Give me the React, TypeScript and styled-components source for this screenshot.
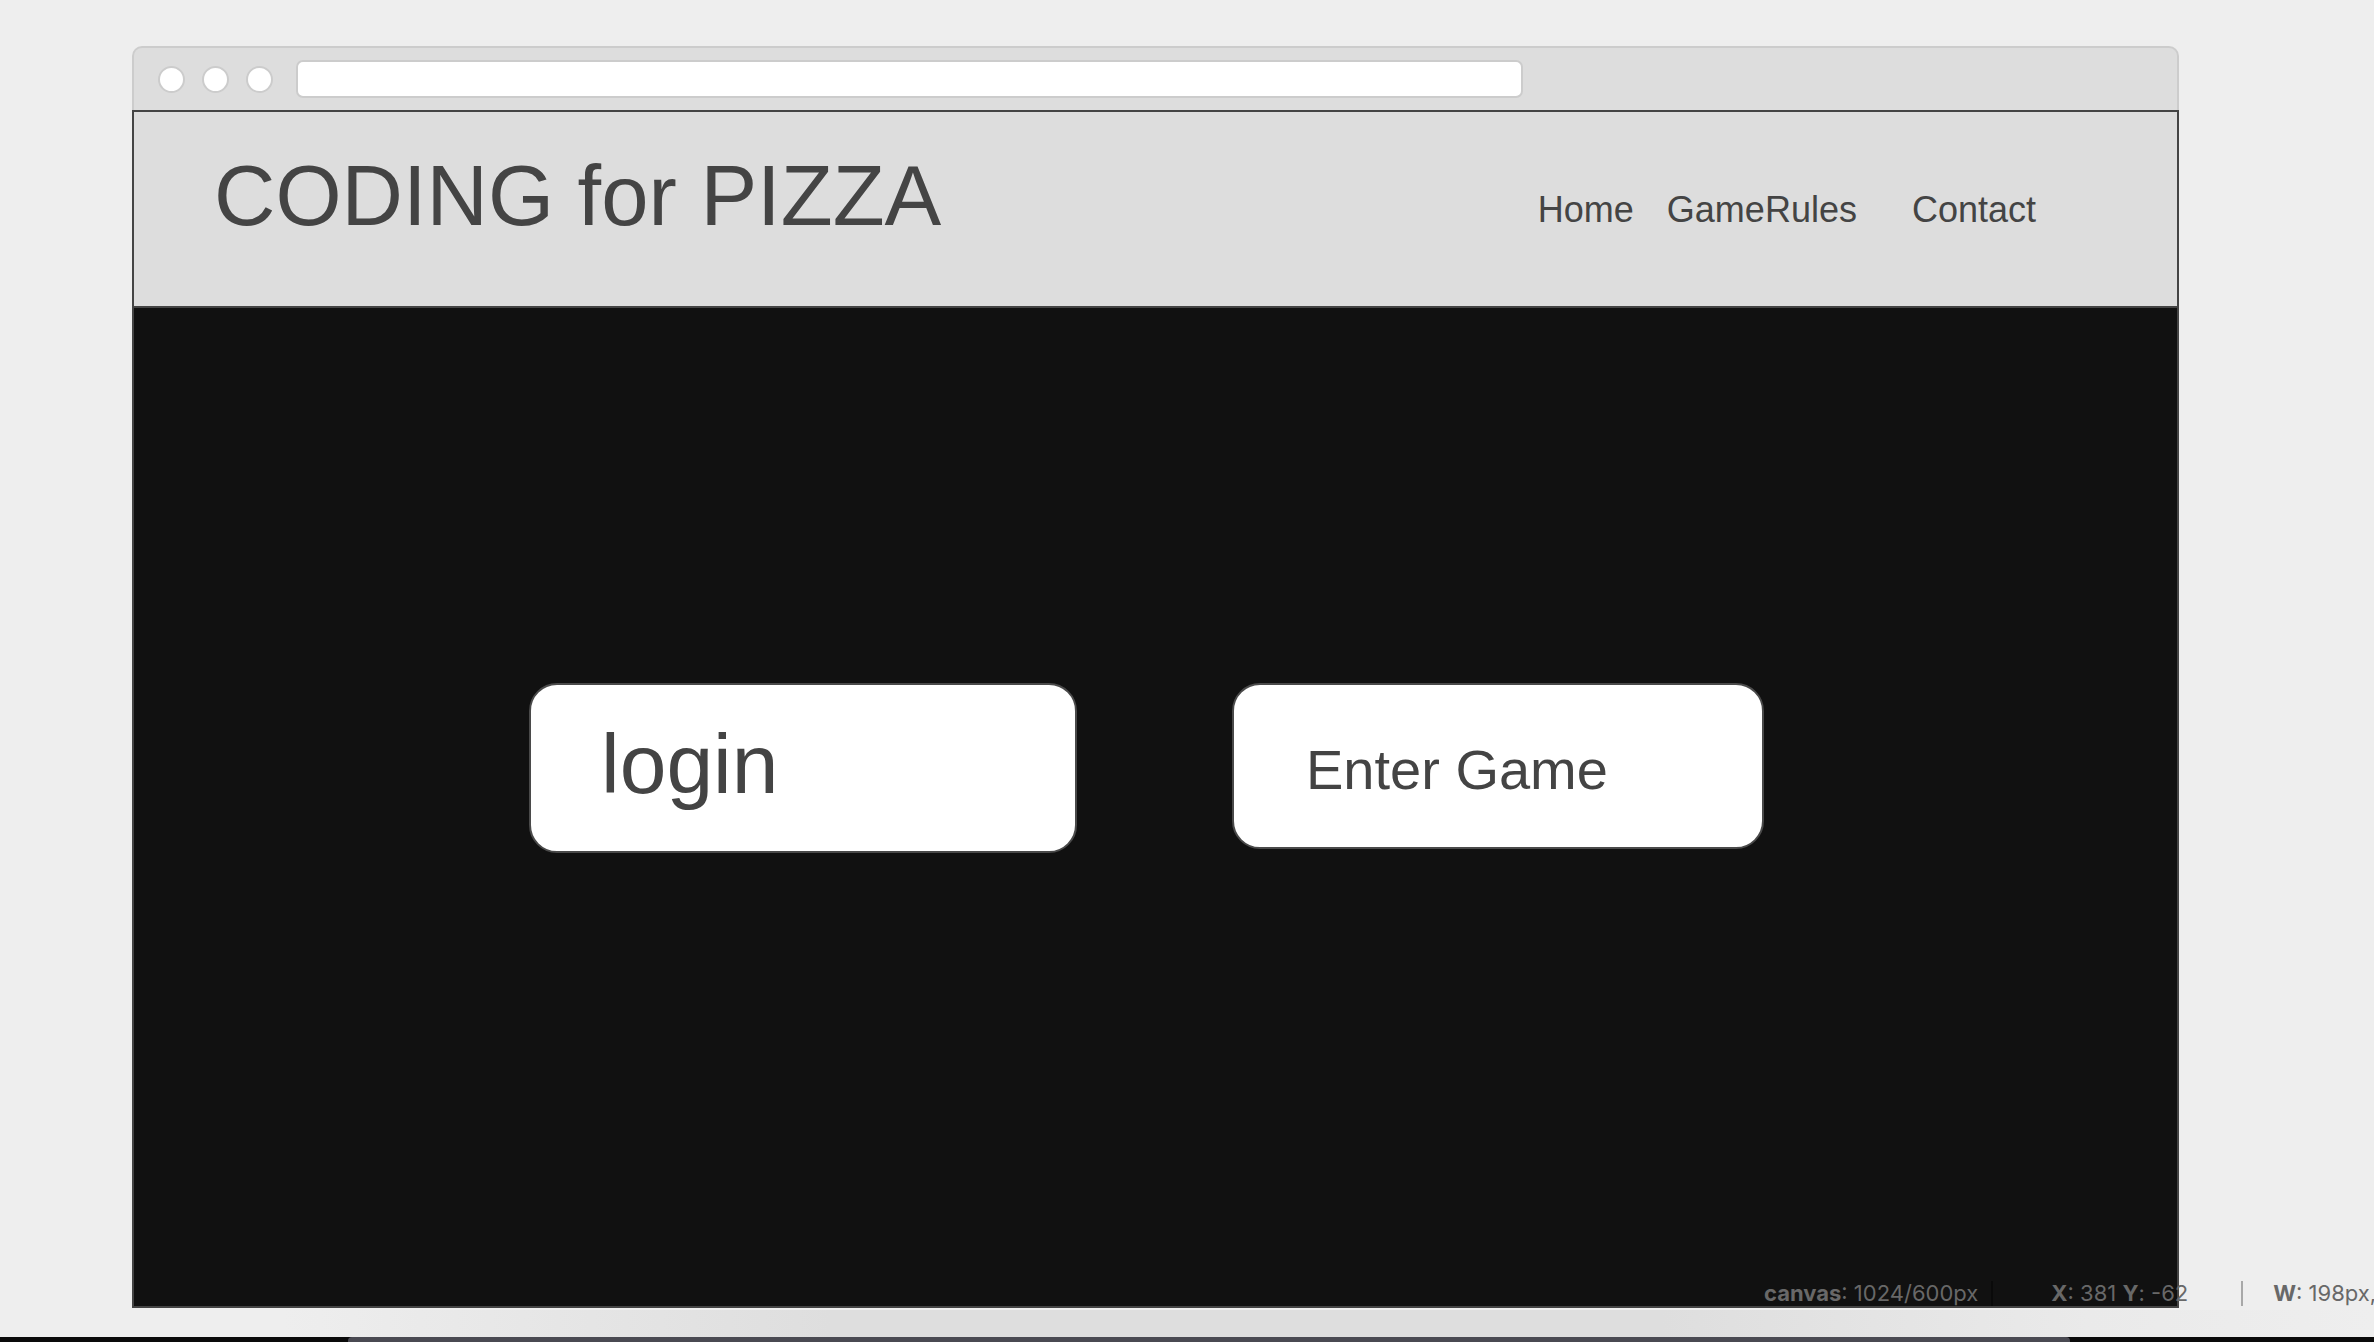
import React from "react";
import styled, { createGlobalStyle } from "styled-components";

const GlobalStyle = createGlobalStyle`
  html, body {
    margin: 0;
    padding: 0;
    background: #eeeeee;
    font-family: "Liberation Sans", Arial, sans-serif;
  }
  * { box-sizing: border-box; }
`;

const Page = styled.div`
  position: relative;
  width: 2374px;
  height: 1342px;
  overflow: hidden;
  display: flex;
  flex-direction: column;
  background: #eeeeee;
`;

const Window = styled.div`
  margin: 46px 0 0 132px;
  width: 2047px;
  display: flex;
  flex-direction: column;
`;

const TitleBar = styled.div`
  height: 64px;
  background: #dddddd;
  border: 2px solid #cccccc;
  border-bottom: none;
  border-radius: 10px 10px 0 0;
  display: flex;
  align-items: center;
  padding-left: 24px;
  gap: 17px;
`;

const Light = styled.span`
  width: 27px;
  height: 27px;
  border-radius: 50%;
  background: #ffffff;
  border: 2px solid #cccccc;
  flex: none;
`;

const AddressBar = styled.div`
  margin-left: 6px;
  width: 1227px;
  height: 38px;
  background: #ffffff;
  border: 2px solid #cccccc;
  border-radius: 7px;
`;

const Content = styled.div`
  border: 2px solid #444444;
  display: flex;
  flex-direction: column;
`;

const Header = styled.header`
  height: 196px;
  background: #dddddd;
  border-bottom: 2px solid #444444;
  display: flex;
  justify-content: space-between;
  align-items: flex-start;
  padding: 0 141px 0 80px;
`;

const Title = styled.h1`
  margin: 35px 0 0 0;
  font-size: 85px;
  line-height: normal;
  font-weight: 400;
  color: #444444;
  font-family: "Liberation Sans", Arial, sans-serif;
`;

const Nav = styled.nav`
  margin-top: 77px;
  display: flex;
  align-items: baseline;
`;

const NavLink = styled.a<{ $gap: number }>`
  margin-left: ${(p) => p.$gap}px;
  font-size: 36px;
  line-height: normal;
  color: #444444;
  text-decoration: none;
  font-family: "Liberation Sans", Arial, sans-serif;
`;

const Stage = styled.main`
  height: 998px;
  background: #111111;
  display: flex;
  align-items: flex-start;
  padding: 375px 0 0 395px;
  gap: 155px;
`;

const Button = styled.button<{ $w: number; $h: number; $fs: number; $pl: number; $shift: number }>`
  width: ${(p) => p.$w}px;
  height: ${(p) => p.$h}px;
  background: #ffffff;
  border: 2px solid #4a4a4a;
  border-radius: 28px;
  display: flex;
  align-items: center;
  padding: ${(p) => Math.max(p.$shift, 0)}px 0 ${(p) => Math.max(-p.$shift, 0)}px ${(p) => p.$pl}px;
  font-family: "Liberation Sans", Arial, sans-serif;
  font-size: ${(p) => p.$fs}px;
  line-height: normal;
  color: #444444;
  cursor: pointer;
`;

const Shelf = styled.div`
  flex: 1;
  background: linear-gradient(
    90deg,
    #eeeeee 0%,
    #eeeeee 12%,
    #dedede 35%,
    #dedede 70%,
    #eaeaea 88%,
    #eeeeee 100%
  );
  margin-top: 2px;
`;

const Dock = styled.div`
  height: 5px;
  background: #0a0a0a;
  display: flex;
`;

const DockPanel = styled.div`
  margin-left: 348px;
  width: 1722px;
  height: 5px;
  background: #4a4a52;
  border-radius: 4px 4px 0 0;
`;

const StatusBar = styled.div`
  position: absolute;
  left: 1764px;
  top: 1280px;
  display: flex;
  align-items: center;
  font-family: Inter, Roboto, "Liberation Sans", sans-serif;
  font-size: 22px;
  line-height: 26px;
  color: #686868;
  white-space: nowrap;
`;

const Segment = styled.span`
  display: inline-block;
`;

const Key = styled.b`
  font-weight: 700;
`;

const Divider = styled.span<{ $color: string; $ml: number; $mr: number }>`
  width: 2px;
  height: 25px;
  background: ${(p) => p.$color};
  margin: 0 ${(p) => p.$mr}px 0 ${(p) => p.$ml}px;
`;

export default function App() {
  return (
    <>
      <GlobalStyle />
      <Page>
        <Window>
          <TitleBar>
            <Light />
            <Light />
            <Light />
            <AddressBar />
          </TitleBar>
          <Content>
            <Header>
              <Title>CODING for PIZZA</Title>
              <Nav>
                <NavLink $gap={0} href="#">Home</NavLink>
                <NavLink $gap={33} href="#">GameRules</NavLink>
                <NavLink $gap={55} href="#">Contact</NavLink>
              </Nav>
            </Header>
            <Stage>
              <Button $w={548} $h={170} $fs={84} $pl={70} $shift={-8}>login</Button>
              <Button $w={532} $h={166} $fs={56} $pl={72} $shift={6}>Enter Game</Button>
            </Stage>
          </Content>
        </Window>
        <Shelf />
        <Dock>
          <DockPanel />
        </Dock>
        <StatusBar>
          <Segment>
            <Key>canvas</Key>: 1024/600px
          </Segment>
          <Divider $color="#0a0a0a" $ml={13} $mr={58} />
          <Segment>
            <Key>X</Key>: 381 <Key>Y</Key>: -62
          </Segment>
          <Divider $color="#a8a8a8" $ml={53} $mr={30} />
          <Segment>
            <Key>W</Key>: 198px,
          </Segment>
        </StatusBar>
      </Page>
    </>
  );
}
